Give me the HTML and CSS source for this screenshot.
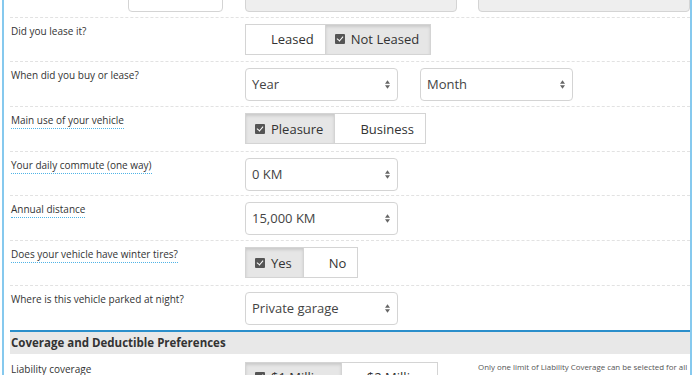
FILE: index.html
```html
<!DOCTYPE html>
<html lang="en">
<head>
    <meta charset="UTF-8">
    <meta name="viewport" content="width=device-width, initial-scale=1.0">
    <title>Vehicle Details</title>
    <link rel="stylesheet" href="styles.css">
</head>
<body>
    <div class="panel">
        <!-- year / make / model (scrolled mostly out of view) -->
        <div class="row row-vehicle">
            <div class="vehicle-year">
                <div class="select">Year<svg class="arrows" viewBox="0 0 6 10"><path d="M3 0 L6 4 H0 Z M3 10 L0 6 H6 Z"/></svg></div>
            </div>
            <div class="select disabled wide">Make<svg class="arrows" viewBox="0 0 6 10"><path d="M3 0 L6 4 H0 Z M3 10 L0 6 H6 Z"/></svg></div>
            <div class="select disabled wide">Model<svg class="arrows" viewBox="0 0 6 10"><path d="M3 0 L6 4 H0 Z M3 10 L0 6 H6 Z"/></svg></div>
        </div>

        <div class="row">
            <div class="label"><span>Did you lease it?</span></div>
            <div class="toggle">
                <div class="opt"><i class="check"></i>Leased</div>
                <div class="opt on"><i class="check"></i>Not Leased</div>
            </div>
        </div>

        <div class="row">
            <div class="label"><span>When did you buy or lease?</span></div>
            <div class="controls">
                <div class="select">Year<svg class="arrows" viewBox="0 0 6 10"><path d="M3 0 L6 4 H0 Z M3 10 L0 6 H6 Z"/></svg></div>
                <div class="select">Month<svg class="arrows" viewBox="0 0 6 10"><path d="M3 0 L6 4 H0 Z M3 10 L0 6 H6 Z"/></svg></div>
            </div>
        </div>

        <div class="row">
            <div class="label"><span class="tip">Main use of your vehicle</span></div>
            <div class="toggle">
                <div class="opt on"><i class="check"></i>Pleasure</div>
                <div class="opt"><i class="check"></i>Business</div>
            </div>
        </div>

        <div class="row">
            <div class="label"><span class="tip">Your daily commute (one way)</span></div>
            <div class="select">0 KM<svg class="arrows" viewBox="0 0 6 10"><path d="M3 0 L6 4 H0 Z M3 10 L0 6 H6 Z"/></svg></div>
        </div>

        <div class="row">
            <div class="label"><span class="tip">Annual distance</span></div>
            <div class="select">15,000 KM<svg class="arrows" viewBox="0 0 6 10"><path d="M3 0 L6 4 H0 Z M3 10 L0 6 H6 Z"/></svg></div>
        </div>

        <div class="row">
            <div class="label"><span class="tip">Does your vehicle have winter tires?</span></div>
            <div class="toggle">
                <div class="opt on"><i class="check"></i>Yes</div>
                <div class="opt"><i class="check"></i>No</div>
            </div>
        </div>

        <div class="row last">
            <div class="label"><span>Where is this vehicle parked at night?</span></div>
            <div class="select">Private garage<svg class="arrows" viewBox="0 0 6 10"><path d="M3 0 L6 4 H0 Z M3 10 L0 6 H6 Z"/></svg></div>
        </div>

        <h2 class="section-title">Coverage and Deductible Preferences</h2>

        <div class="row first-in-section">
            <div class="label"><span>Liability coverage</span></div>
            <div class="toggle">
                <div class="opt on"><i class="check"></i>$1 Million</div>
                <div class="opt"><i class="check"></i>$2 Million</div>
            </div>
            <p class="help">Only one limit of Liability Coverage can be selected for all vehicles on the policy.</p>
        </div>
    </div>
</body>
</html>
```

FILE: styles.css
```css
body {
    margin: 0;
    font-family: "Open Sans", Arial, sans-serif;
    color: #333;
    background: #fff;
    overflow: hidden;
}
.panel {
    margin: -27px 0 0 2px;
    width: 690px;
    box-sizing: border-box;
    border-left: 2px solid #86c9ee;
    border-right: 2px solid #86c9ee;
    padding: 0 0 0 6px;
}
.row {
    display: flex;
    align-items: flex-start;
    min-height: 33px;
    padding: 6px 0 4.7px;
    border-bottom: 1px dashed #e2e2e2;
}
.row.last {
    border-bottom: none;
}
.row.first-in-section {
    padding-top: 8px;
}
.label {
    width: 234px;
    flex-shrink: 0;
    padding: 0 0 0 1px;
    font-size: 10px;
    line-height: 14px;
}
.tip {
    border-bottom: 1px dotted #4fb3e6;
    padding-bottom: 1px;
}
.controls {
    display: flex;
    gap: 22px;
}
.select {
    position: relative;
    box-sizing: border-box;
    width: 153px;
    height: 33px;
    padding: 0 20px 0 6px;
    border: 1px solid #d4d4d4;
    border-radius: 4px;
    font-size: 13px;
    line-height: 31px;
    color: #444;
    background: #fff;
}
.arrows {
    position: absolute;
    right: 7px;
    top: 11px;
    width: 5px;
    height: 9px;
    fill: #666;
}
.select.disabled {
    background: #eee;
    color: #999;
}
.row-vehicle {
    gap: 21px;
}
.vehicle-year {
    width: 213px;
    display: flex;
    justify-content: flex-end;
    padding-right: 1px;
}
.vehicle-year .select {
    width: 95px;
}
.select.wide {
    width: 212px;
}
.toggle {
    display: flex;
    border: 1px solid #d4d4d4;
    height: 31px;
    box-sizing: border-box;
}
.opt {
    display: flex;
    align-items: center;
    padding: 0 11px 0 9px;
    font-size: 13px;
    color: #333;
    background: #fff;
}
.opt + .opt {
    border-left: 1px solid #d4d4d4;
}
.opt.on {
    background: #e6e6e6;
    box-shadow: inset 0 2px 3px rgba(0, 0, 0, 0.12);
}
.check {
    position: relative;
    width: 10px;
    height: 10px;
    margin-right: 6px;
    border-radius: 1px;
    background: #555;
    visibility: hidden;
}
.opt.on .check {
    visibility: visible;
}
.check::after {
    content: "";
    position: absolute;
    left: 3px;
    top: 1px;
    width: 3px;
    height: 5px;
    border: solid #fff;
    border-width: 0 1.5px 1.5px 0;
    transform: rotate(40deg);
}
.section-title {
    margin: 0;
    padding: 0 0 0 1px;
    height: 22px;
    line-height: 22px;
    border-top: 2px solid #2b8fcb;
    background: #e8e8e8;
    font-size: 11.5px;
    font-weight: bold;
    color: #333;
}
.help {
    margin: 0 0 0 auto;
    width: 212px;
    font-size: 7.9px;
    line-height: 11px;
    color: #555;
}
```
